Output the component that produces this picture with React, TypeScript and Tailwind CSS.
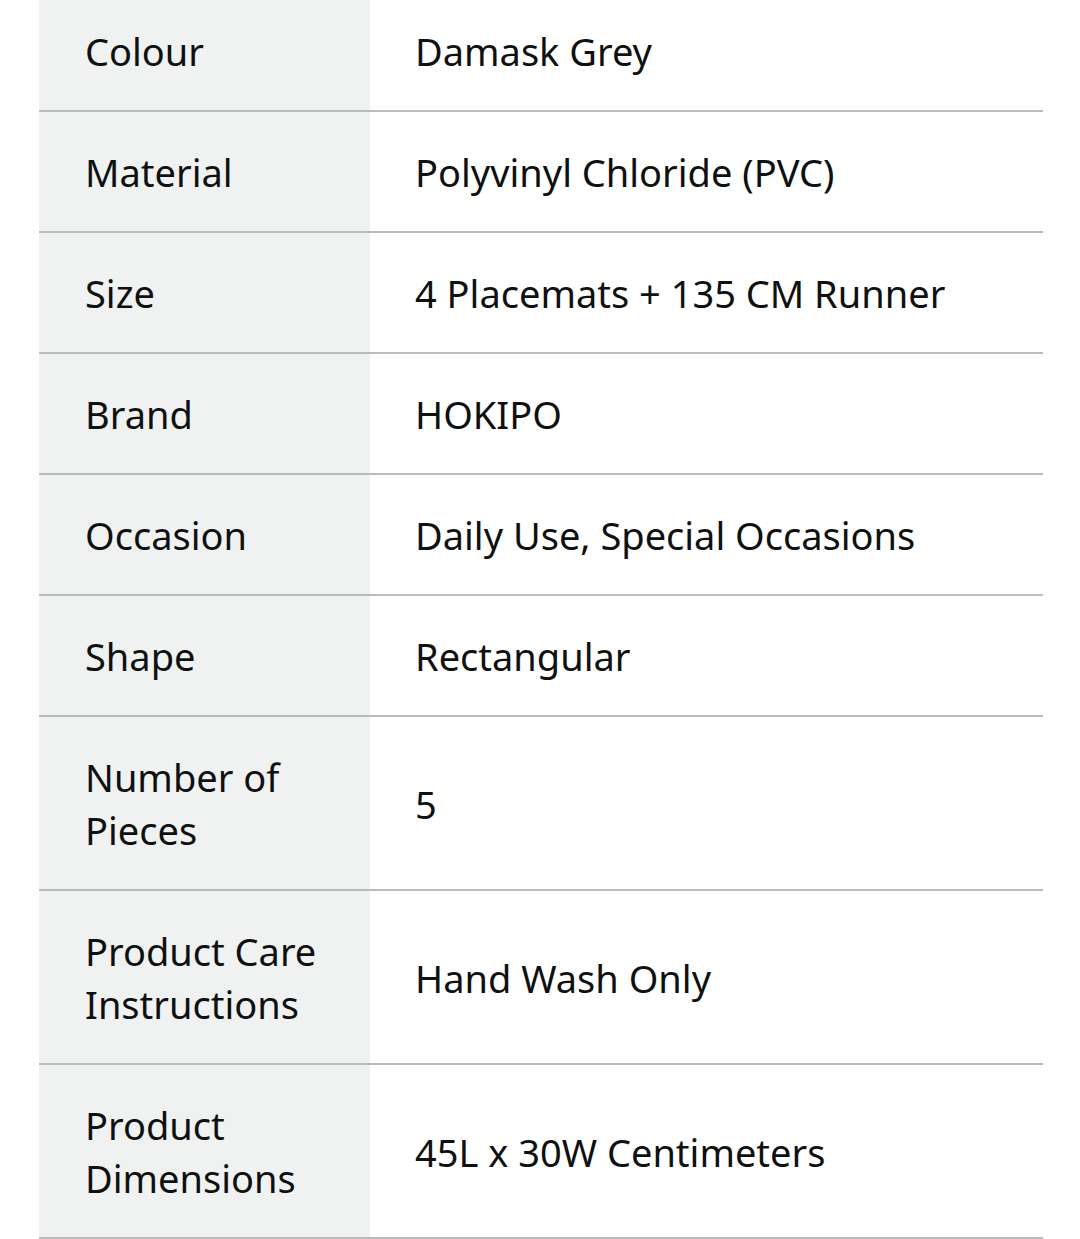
const rows: [string, string][] = [
  ["Colour", "Damask Grey"],
  ["Material", "Polyvinyl Chloride (PVC)"],
  ["Size", "4 Placemats + 135 CM Runner"],
  ["Brand", "HOKIPO"],
  ["Occasion", "Daily Use, Special Occasions"],
  ["Shape", "Rectangular"],
  ["Number of Pieces", "5"],
  ["Product Care Instructions", "Hand Wash Only"],
  ["Product Dimensions", "45L x 30W Centimeters"],
];

export default function App() {
  return (
    <div
      className="w-[1080px] h-[1239px] overflow-hidden bg-white text-[#0f1111]"
      style={{ fontFamily: '"Noto Sans", "Open Sans", sans-serif' }}
    >
      <div className="ml-[39px] w-[1004px] -mt-[9px]">
        {rows.map(([k, v]) => (
          <div key={k} className="flex border-b-2 border-[#bbbbbb]">
            <div className="w-[331px] shrink-0 bg-[#f0f2f2] pl-[46px] pr-[30px] pt-[34px] pb-[32px] text-[38px] leading-[53px]">
              {k}
            </div>
            <div className="flex-1 flex items-center pl-[45px] pr-4 pt-[34px] pb-[32px] text-[38px] leading-[53px]">
              {v}
            </div>
          </div>
        ))}
      </div>
    </div>
  );
}
